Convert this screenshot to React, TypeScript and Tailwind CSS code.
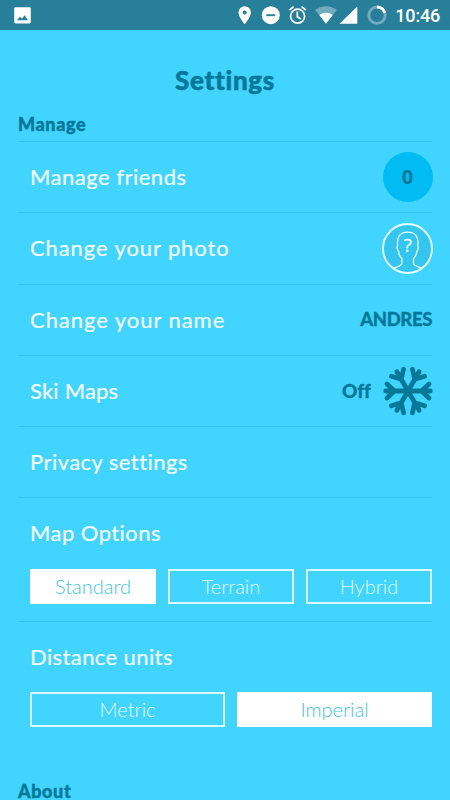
import type { ReactNode } from "react";

function StatusBar() {
  return (
    <header className="flex h-[30px] shrink-0 items-center bg-[#277f9a] pl-[14px] pr-[10px] text-white">
      <svg width="17" height="17" viewBox="0 0 17 17">
        <path
          fillRule="evenodd"
          fill="currentColor"
          d="M1.5 0.2h14a1.3 1.3 0 0 1 1.3 1.3v13.6a1.3 1.3 0 0 1-1.3 1.3h-14a1.3 1.3 0 0 1-1.3-1.3V1.500A1.300 1.300 0 0 1 1.500 0.200zM3 13.200h11l-3.400-5-2.700 3.500-2-2.300z"
        />
      </svg>
      <svg width="200" height="30" viewBox="238 0 200 30" className="ml-[207px] mr-[-43px] shrink-0">
        <path
          fill="white"
          fillRule="evenodd"
          d="M244.700 6.200a6.200 6.200 0 0 0-6.200 6.200c0 4.600 6.200 11.700 6.200 11.700s6.200-7.100 6.200-11.700a6.200 6.200 0 0 0-6.200-6.200zm0 4.200a2 2 0 1 1 0 4 2 2 0 0 1 0-4z"
        />
        <circle cx="270.800" cy="15.200" r="9" fill="white" />
        <path d="M266.300 15.200h9" stroke="#277f9a" strokeWidth="1.900" />
        <g fill="none" stroke="white" strokeWidth="1.700">
          <circle cx="297.600" cy="16.200" r="7" />
          <path d="M297.300 11.500v5.200l3.600 2.300M289.400 10.200l4.200-3.500M305.800 10.200l-4.200-3.500" />
        </g>
        <path d="M315.200 10.100a17.200 17.200 0 0 1 21.600 0L326 23.800z" fill="white" fillOpacity="0.350" />
        <path d="M319.300 15.100a11 11 0 0 1 13.400 0L326 23.800z" fill="white" />
        <path d="M357.300 6.500V23.800H339.500z" fill="white" />
        <g fill="none" strokeWidth="2.900">
          <circle cx="377" cy="15.200" r="8.200" stroke="white" strokeOpacity="0.350" />
          <path d="M377 7a8.200 8.200 0 0 1 7.800 5.700" stroke="white" />
        </g>
      </svg>
      <time className="ml-auto whitespace-nowrap pt-px font-['Roboto',sans-serif] text-[18px] font-medium leading-[30px] tracking-[-0.2px]">
        10:46
      </time>
    </header>
  );
}

function Row({ label, tracking, children }: { label: string; tracking: string; children?: ReactNode }) {
  return (
    <div className="flex h-[71.300px] items-center justify-between border-t border-[#35c8f2] pl-3">
      <span className={`text-[22px] leading-none text-[#f2fdff] [-webkit-text-stroke:0.2px_#f2fdff] ${tracking}`}>
        {label}
      </span>
      {children}
    </div>
  );
}

function Choice({ active = false, children }: { active?: boolean; children: ReactNode }) {
  return (
    <button
      className={`flex h-[35px] flex-1 items-center justify-center border-2 border-[#d8faff] pb-[2px] text-[20px] font-light leading-none ${
        active ? "border-white bg-white text-[#40c5e8]" : "text-[#e3fbff]"
      }`}
    >
      {children}
    </button>
  );
}

function Avatar() {
  return (
    <svg width="51" height="51" viewBox="0 0 50 50" fill="none" stroke="#e3fcff" className="-mr-px">
      <circle cx="25" cy="25" r="24" fill="#35c6f0" strokeWidth="1.900" />
      <path
        strokeWidth="1.300"
        strokeLinejoin="round"
        d="M11.500 44.300C15 42.500 19.300 42.200 19.500 39.500v-4.700c-2.300-1.800-3-4.800-3.300-7.300-1.300-.6-1.700-4.200-.9-5.200-.8-8.500 2-13.300 9.900-13.300s10.700 4.800 9.900 13.300c.8 1 .4 4.600-.9 5.200-.3 2.500-1 5.500-3.300 7.300v4.700c.2 2.700 4.500 3 8 4.800"
      />
      <text
        x="25.200"
        y="28.500"
        textAnchor="middle"
        fontFamily="Open Sans, sans-serif"
        fontSize="18.500"
        fill="#e3fcff"
        strokeWidth="0.300"
      >
        ?
      </text>
    </svg>
  );
}

function Snowflake() {
  return (
    <svg
      width="50"
      height="52"
      viewBox="-25 -26 50 52"
      fill="none"
      stroke="#087898"
      strokeWidth="4.800"
      strokeLinecap="round"
      className="-mr-px"
    >
      {[0, 60, 120, 180, 240, 300].map((angle) => (
        <path key={angle} transform={`rotate(${angle})`} d="M0 0H22.300M21-7L13.500 0l7.500 7" />
      ))}
    </svg>
  );
}

export default function App() {
  return (
    <div className="flex h-[800px] w-[450px] flex-col overflow-hidden bg-[#40d4ff] font-['Lato',sans-serif] [font-variant-ligatures:none]">
      <StatusBar />
      <main className="flex flex-col px-[18px] text-[#087898]">
        <h1 className="mt-[35px] text-center text-[26px] font-black leading-[30px] tracking-[0.700px] [-webkit-text-stroke:0.5px_#087898]">
          Settings
        </h1>
        <h2 className="mb-[7px] mt-[19px] text-[18px] font-black leading-[20px] tracking-[0.600px] [-webkit-text-stroke:0.4px_#087898]">
          Manage
        </h2>
        <Row label="Manage friends" tracking="tracking-[0.500px]">
          <span className="mr-[-0.5px] flex size-[50px] items-center justify-center rounded-full bg-[#00bcf2] font-['Noto_Sans',sans-serif] text-[20px] font-bold">
            0
          </span>
        </Row>
        <Row label="Change your photo" tracking="tracking-[0.900px]">
          <Avatar />
        </Row>
        <Row label="Change your name" tracking="tracking-[0.950px]">
          <span className="text-[18.500px] font-black tracking-[-0.400px] [-webkit-text-stroke:0.3px_#087898]">ANDRES</span>
        </Row>
        <Row label="Ski Maps" tracking="tracking-[0.2px]">
          <span className="flex items-center gap-3">
            <span className="text-[19px] font-black [-webkit-text-stroke:0.3px_#087898]">Off</span>
            <Snowflake />
          </span>
        </Row>
        <Row label="Privacy settings" tracking="tracking-[0.450px]" />
        <section className="h-[124px] border-t border-[#35c8f2] pl-3 pt-[23px]">
          <h3 className="text-[22px] leading-[24px] tracking-[0.450px] text-[#f2fdff] [-webkit-text-stroke:0.2px_#f2fdff]">
            Map Options
          </h3>
          <div className="mt-[24px] flex gap-3">
            <Choice active>Standard</Choice>
            <Choice>Terrain</Choice>
            <Choice>Hybrid</Choice>
          </div>
        </section>
        <section className="border-t border-[#35c8f2] pl-3 pt-[23px]">
          <h3 className="text-[22px] leading-[24px] tracking-[0.400px] text-[#f2fdff] [-webkit-text-stroke:0.2px_#f2fdff]">
            Distance units
          </h3>
          <div className="mt-[23px] flex gap-3">
            <Choice>Metric</Choice>
            <Choice active>Imperial</Choice>
          </div>
        </section>
        <h2 className="mt-[55px] text-[18px] font-black leading-[18px] tracking-[0.600px] [-webkit-text-stroke:0.4px_#087898]">
          About
        </h2>
      </main>
    </div>
  );
}
